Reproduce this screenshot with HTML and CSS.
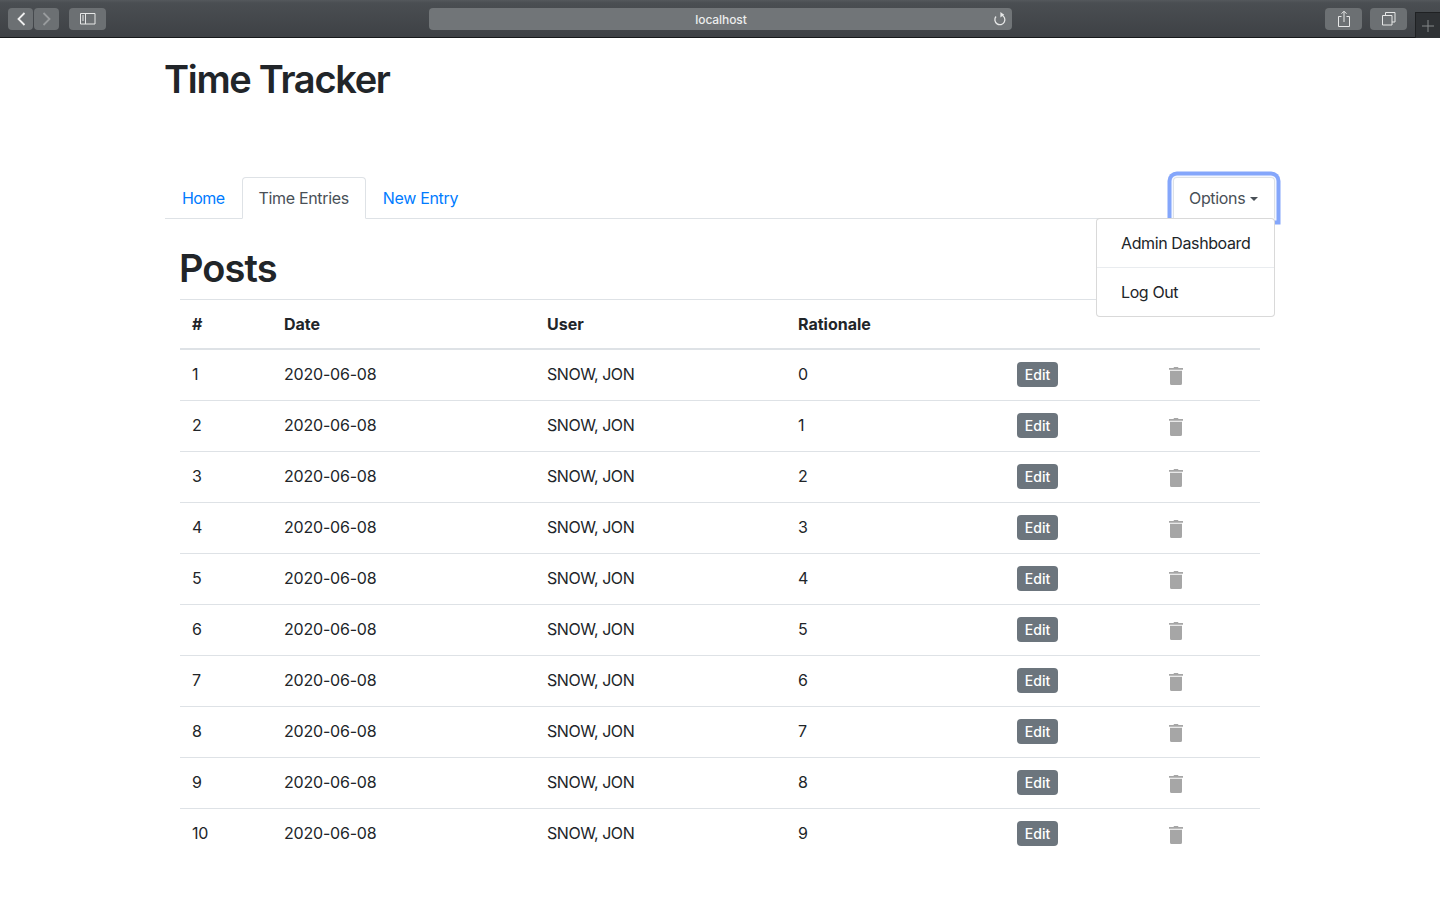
FILE: index.html
```html
<!DOCTYPE html>
<html lang="en">
<head>
<meta charset="utf-8">
<title>Time Tracker</title>
<link rel="stylesheet" href="styles.css">
</head>
<body>
<svg class="defs" width="0" height="0"><symbol id="trash" viewBox="0 0 16 18"><path d="M6 0h4l.5 1H15v1.800H1V1h4.500zM2 3.700h12v12.800a1.500 1.500 0 0 1-1.500 1.500h-9A1.500 1.500 0 0 1 2 16.500z"/></symbol></svg>
<header class="chrome">
  <div class="nav-pair">
    <span class="cbtn back"><svg width="12" height="16" viewBox="0 0 12 16"><path d="M9.500 2 3.500 8l6 6" class="ic"/></svg></span>
    <span class="cbtn fwd"><svg width="12" height="16" viewBox="0 0 12 16"><path d="M2.500 2l6 6-6 6" class="ic dim"/></svg></span>
  </div>
  <span class="cbtn side"><svg width="16" height="12" viewBox="0 0 16 12"><path d="M.5.5h14.500v10.500H.5zM5.500.5v10.500" class="ic thin"/><path d="M2 3h2M2 5h2M2 7h2" class="ic thin"/></svg></span>
  <div class="address">
    <span class="address-text">localhost</span>
    <svg class="reload" width="14" height="14" viewBox="0 0 14 14"><path d="M8.600 3A5 5 0 1 1 3 4.500" class="ic thin bold"/><path d="M7.400 0v5.400l3.800-2.700z" class="fillic"/></svg>
  </div>
  <span class="cbtn tool share"><svg width="14" height="18" viewBox="0 0 14 18"><path d="M4.500 6.500H1.500v10h11v-10H9.500M7 12V1.500M4.500 3.700 7 1.200l2.500 2.500" class="ic thin"/></svg></span>
  <span class="cbtn tool tabs"><svg width="14" height="14" viewBox="0 0 14 14"><path d="M.5 3.500h9.500v9.500H.5zM3.500 3.500V.5H13v9.500h-3" class="ic thin"/></svg></span>
  <span class="newtab"><svg width="12" height="12" viewBox="0 0 12 12"><path d="M6 0v12M0 6h12" class="ic thin plus"/></svg></span>
</header>

<main class="container">
  <h1 class="title">Time Tracker</h1>
  <nav class="tabs-bar">
    <a class="tab link home">Home</a>
    <a class="tab active">Time Entries</a>
    <a class="tab link">New Entry</a>
    <div class="options">
      <button class="tab options-btn">Options<span class="caret"></span></button>
      <div class="menu">
        <a class="menu-item first">Admin Dashboard</a>
        <a class="menu-item divided">Log Out</a>
      </div>
    </div>
  </nav>

  <section class="content">
    <h2 class="posts">Posts</h2>
    <table class="grid">
      <colgroup><col class="c1"><col class="c2"><col class="c3"><col class="c4"><col class="c5"><col class="c6"></colgroup>
      <thead><tr><th>#</th><th>Date</th><th>User</th><th>Rationale</th><th></th><th></th></tr></thead>
      <tbody>
        <tr><td>1</td><td>2020-06-08</td><td>SNOW, JON</td><td>0</td><td><button class="edit">Edit</button></td><td><svg class="trash"><use href="#trash"/></svg></td></tr>
        <tr><td>2</td><td>2020-06-08</td><td>SNOW, JON</td><td>1</td><td><button class="edit">Edit</button></td><td><svg class="trash"><use href="#trash"/></svg></td></tr>
        <tr><td>3</td><td>2020-06-08</td><td>SNOW, JON</td><td>2</td><td><button class="edit">Edit</button></td><td><svg class="trash"><use href="#trash"/></svg></td></tr>
        <tr><td>4</td><td>2020-06-08</td><td>SNOW, JON</td><td>3</td><td><button class="edit">Edit</button></td><td><svg class="trash"><use href="#trash"/></svg></td></tr>
        <tr><td>5</td><td>2020-06-08</td><td>SNOW, JON</td><td>4</td><td><button class="edit">Edit</button></td><td><svg class="trash"><use href="#trash"/></svg></td></tr>
        <tr><td>6</td><td>2020-06-08</td><td>SNOW, JON</td><td>5</td><td><button class="edit">Edit</button></td><td><svg class="trash"><use href="#trash"/></svg></td></tr>
        <tr><td>7</td><td>2020-06-08</td><td>SNOW, JON</td><td>6</td><td><button class="edit">Edit</button></td><td><svg class="trash"><use href="#trash"/></svg></td></tr>
        <tr><td>8</td><td>2020-06-08</td><td>SNOW, JON</td><td>7</td><td><button class="edit">Edit</button></td><td><svg class="trash"><use href="#trash"/></svg></td></tr>
        <tr><td>9</td><td>2020-06-08</td><td>SNOW, JON</td><td>8</td><td><button class="edit">Edit</button></td><td><svg class="trash"><use href="#trash"/></svg></td></tr>
        <tr><td>10</td><td>2020-06-08</td><td>SNOW, JON</td><td>9</td><td><button class="edit">Edit</button></td><td><svg class="trash"><use href="#trash"/></svg></td></tr>
      </tbody>
    </table>
  </section>
</main>
</body>
</html>
```
FILE: styles.css
```css
* { box-sizing: border-box; }
html, body { margin: 0; padding: 0; height: 100%; overflow: hidden; }
body { font-family: Inter, "Liberation Sans", sans-serif; font-size: 16px; line-height: 24px; color: #212529; background: #fff; }
.defs { display: block; height: 0; }

.chrome { height: 38px; display: flex; align-items: flex-start; padding: 8px 0 0 8px; background: linear-gradient(#54585c 0, #4a4e52 3px, #3e4145 100%); border-bottom: 1px solid #17191b; position: relative; }
.nav-pair { display: flex; gap: 1px; }
.cbtn { height: 22px; display: flex; align-items: center; justify-content: center; background: #6c7073; border-radius: 4px; }
.back, .fwd { width: 25px; }
.side { width: 37px; margin-left: 10px; }
.address { position: absolute; left: 429px; top: 8px; width: 583px; height: 22px; border-radius: 4px; background: #717578; display: flex; align-items: center; justify-content: center; }
.address-text { font-size: 12px; line-height: 16px; color: #eceded; font-weight: 500; margin: 1px 0 0 1px; letter-spacing: -0.1px; }
.reload { position: absolute; right: 5px; top: 4px; }
.tool { width: 37px; position: absolute; top: 8px; }
.share { left: 1325px; }
.tabs { left: 1370px; }
.newtab { position: absolute; left: 1415px; top: 12px; width: 25px; height: 26px; background: #2f3235; border-left: 1px solid #1f2123; border-top: 1px solid #1f2123; display: flex; align-items: center; justify-content: center; }
.ic { fill: none; stroke: #f0f0f0; stroke-width: 1.800; }
.ic.dim { stroke: #999c9e; }
.ic.thin { stroke-width: 1; stroke: #e6e7e7; }
.ic.bold { stroke-width: 1.300; }
.ic.plus { stroke: #85888a; }
.fillic { fill: #e6e7e7; }

.container { width: 1110px; margin: 0 auto; }
.title { margin: 0 0 0 -1px; padding-top: 17px; font-size: 38px; line-height: 48px; font-weight: 600; height: 139px; letter-spacing: -1.3px; }
.tabs-bar { display: flex; height: 42px; border-bottom: 1px solid #dee2e6; position: relative; letter-spacing: -0.33px; }
.tab { display: block; height: 42px; padding: 8px 16px; font: inherit; letter-spacing: inherit; line-height: 24px; border: 1px solid transparent; border-radius: 4px 4px 0 0; }
.home { letter-spacing: -0.58px; }
.link { color: #007bff; }
.active { color: #495057; background: #fff; border-color: #dee2e6 #dee2e6 #fff; }
.options { margin-left: auto; position: relative; }
.options-btn { color: #495057; background: #fff; border-color: #dee2e6 #dee2e6 #fff; width: 102px; box-shadow: 0 0 0 1.500px #f4f7ff, 0 0 0 5.500px #84a6fb; outline: 0; padding: 8px 15px; white-space: nowrap; text-align: left; }
.caret { display: inline-block; margin-left: 5px; vertical-align: 3px; border-top: 4.800px solid #495057; border-left: 4.800px solid transparent; border-right: 4.800px solid transparent; }
.menu { position: absolute; right: 0; top: 41px; width: 179px; height: 99px; background: #fff; border: 1px solid rgba(0,0,0,.15); border-radius: 4px; z-index: 2; letter-spacing: -0.39px; }
.menu-item { display: block; height: 49px; padding: 12px 24px; color: #212529; white-space: nowrap; }
.first { height: 48px; }
.divided { border-top: 1px solid #e9ecef; }

.content { padding: 0 15px; }
.posts { margin: 0 0 0 -1px; padding-top: 25px; height: 80px; font-size: 38px; line-height: 48px; font-weight: 600; letter-spacing: -0.9px; }
.grid { width: 1080px; table-layout: fixed; border-collapse: collapse; }
.c1 { width: 92px; } .c2 { width: 263px; } .c3 { width: 251px; } .c4 { width: 219px; } .c5 { width: 151px; } .c6 { width: 104px; }
th { height: 49px; padding: 12px; text-align: left; font-weight: 700; border-top: 1px solid #dee2e6; border-bottom: 2px solid #dee2e6; }
td { height: 51px; padding: 11px 12px 13px; border-bottom: 1px solid #dee2e6; vertical-align: middle; letter-spacing: -0.2px; }
td:nth-child(3) { letter-spacing: -0.45px; }
tbody tr:last-child td { border-bottom: 0; }
.edit { display: block; width: 41px; height: 25px; margin-top: 1px; padding: 0; font: inherit; font-size: 14px; font-weight: 500; line-height: 21px; color: #fff; background: #6c757d; border: 0; border-radius: 4px; }
.trash { display: block; width: 16px; height: 18px; margin-top: 3px; fill: #a6a6a6; }
```
